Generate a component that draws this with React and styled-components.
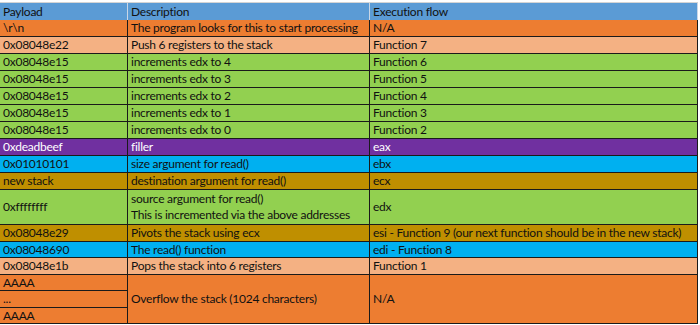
import React from "react";
import styled, { createGlobalStyle } from "styled-components";

const GlobalStyle = createGlobalStyle`
    body {
        margin: 0;
        background: #ffffff;
        font-family: Lato, "Liberation Sans", sans-serif;
    }
`;

const colors = {
    blue: "#5B9BD5",
    orange: "#ED7D31",
    peach: "#F4B183",
    green: "#92D050",
    purple: "#7030A0",
    cyan: "#00B0F0",
    gold: "#BF8F00",
};

const Page = styled.div`
    padding-top: 2px;
    width: 698px;
`;

const Grid = styled.div`
    display: grid;
    grid-template-columns: 128px 242px 328px;
    grid-template-rows: 17px repeat(10, 17px) 35px 17px 16px 17px 16px 17px 16px;
    border-top: 1px solid #d4d4d4;
`;

const HeadCell = styled.div`
    background: ${colors.blue};
    border-right: 1px solid #c9d6e6;
    color: #111;
    font-size: 12px;
    letter-spacing: -0.25px;
    display: flex;
    align-items: center;
    padding-left: 3px;
    white-space: nowrap;
`;

const Cell = styled.div`
    background: ${(p) => colors[p.$bg]};
    color: ${(p) => (p.$bg === "purple" ? "#ffffff" : "#111")};
    border-right: 1px solid #1a1a1a;
    border-bottom: 1px solid #1a1a1a;
    grid-row: ${(p) => (p.$span ? `span ${p.$span}` : "auto")};
    font-size: 12px;
    letter-spacing: -0.25px;
    display: flex;
    flex-direction: column;
    justify-content: center;
    padding-left: 3px;
    white-space: nowrap;
    overflow: hidden;
    line-height: 16px;
`;

const rows = [
    ["orange", "\\r\\n", "The program looks for this to start processing", "N/A"],
    ["peach", "0x08048e22", "Push 6 registers to the stack", "Function 7"],
    ["green", "0x08048e15", "increments edx to 4", "Function 6"],
    ["green", "0x08048e15", "increments edx to 3", "Function 5"],
    ["green", "0x08048e15", "increments edx to 2", "Function 4"],
    ["green", "0x08048e15", "increments edx to 1", "Function 3"],
    ["green", "0x08048e15", "increments edx to 0", "Function 2"],
    ["purple", "0xdeadbeef", "filler", "eax"],
    ["cyan", "0x01010101", "size argument for read()", "ebx"],
    ["gold", "new stack", "destination argument for read()", "ecx"],
    ["green", "0xffffffff", ["source argument for read()", "This is incremented via the above addresses"], "edx"],
    ["gold", "0x08048e29", "Pivots the stack using ecx", "esi - Function 9 (our next function should be in the new stack)"],
    ["cyan", "0x08048690", "The read() function", "edi - Function 8"],
    ["peach", "0x08048e1b", "Pops the stack into 6 registers", "Function 1"],
];

const App = () => {
    return (
        <Page>
            <GlobalStyle />
            <Grid>
                <HeadCell>Payload</HeadCell>
                <HeadCell>Description</HeadCell>
                <HeadCell>Execution flow</HeadCell>

                {rows.map(([bg, payload, desc, flow], i) => (
                    <React.Fragment key={i}>
                        <Cell $bg={bg}>{payload}</Cell>
                        <Cell $bg={bg}>
                            {Array.isArray(desc) ? desc.map((line) => <span key={line}>{line}</span>) : desc}
                        </Cell>
                        <Cell $bg={bg}>{flow}</Cell>
                    </React.Fragment>
                ))}

                <Cell $bg="orange">AAAA</Cell>
                <Cell $bg="orange" $span={3}>Overflow the stack (1024 characters)</Cell>
                <Cell $bg="orange" $span={3}>N/A</Cell>
                <Cell $bg="orange">...</Cell>
                <Cell $bg="orange">AAAA</Cell>
            </Grid>
        </Page>
    );
};

export default App;
